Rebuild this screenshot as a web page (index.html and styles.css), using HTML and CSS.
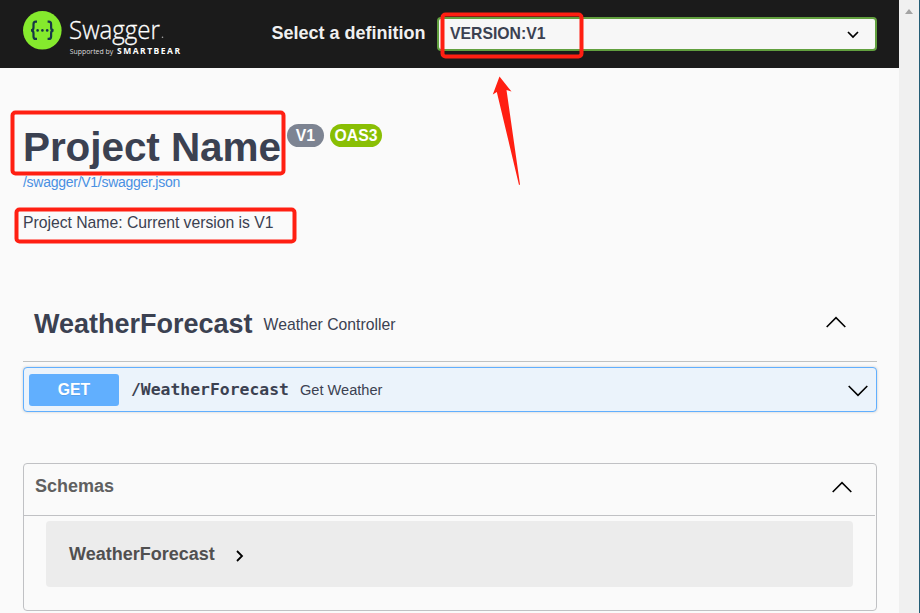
FILE: index.html
```html
<!DOCTYPE html>
<html lang="en">
<head>
<meta charset="utf-8">
<title>Swagger UI</title>
<link rel="stylesheet" href="styles.css">
</head>
<body>
<div class="window">
  <div class="page">
    <header class="topbar">
      <svg class="logo" width="170" height="68" viewBox="0 0 170 68">
        <circle cx="19.3" cy="30.3" r="19.3" fill="#85ea2d"/>
        <g fill="none" stroke="#173647" stroke-width="2.2">
          <path d="M14 21.7h-1.2q-2.3 0-2.3 2.5v3.2q0 2.9-2.5 2.9q2.5 0 2.5 2.9v3.2q0 2.5 2.3 2.5H14"/>
          <path d="M24.6 21.7h1.2q2.3 0 2.3 2.5v3.2q0 2.9 2.5 2.9q-2.5 0-2.5 2.9v3.2q0 2.5-2.3 2.5h-1.2"/>
        </g>
        <g fill="#173647"><circle cx="14.6" cy="30.4" r="1.3"/><circle cx="19.4" cy="30.4" r="1.3"/><circle cx="24.2" cy="30.4" r="1.3"/></g>
        <text class="logo-name" x="46" y="38.5" textLength="91" lengthAdjust="spacingAndGlyphs">Swagger</text>
        <circle cx="139.5" cy="37.3" r=".8" fill="#aaa"/>
        <text class="logo-by" x="46.7" y="54" textLength="43.5" lengthAdjust="spacingAndGlyphs">Supported by</text>
        <text class="logo-company" x="94" y="54" textLength="63">SMARTBEAR</text>
      </svg>
      <label class="definition">
        <span class="definition-label">Select a definition</span>
        <span class="select"><span>VERSION:V1</span>
          <svg width="12" height="8" viewBox="0 0 12 8"><path d="M1 1l5 5 5-5" fill="none" stroke="#000" stroke-width="1.7"/></svg>
        </span>
      </label>
    </header>
    <main class="content">
      <section class="info">
        <div class="title-row">
          <h1>Project Name</h1>
          <span class="badge version">V1</span>
          <span class="badge oas">OAS3</span>
        </div>
        <a class="spec-link">/swagger/V1/swagger.json</a>
        <p class="description">Project Name: Current version is V1</p>
      </section>
      <section class="tag">
        <h2>WeatherForecast</h2>
        <span class="tag-text">Weather Controller</span>
        <svg class="arrow" width="20" height="12" viewBox="0 0 20 12"><path d="M.7 11L10 1.6 19.3 11"/></svg>
      </section>
      <section class="operation">
        <span class="method">GET</span>
        <span class="path">/WeatherForecast</span>
        <span class="summary">Get Weather</span>
        <svg class="arrow" width="20" height="12" viewBox="0 0 20 12"><path d="M.7 1L10 10.4 19.3 1"/></svg>
      </section>
      <section class="schemas">
        <div class="schemas-head">
          <h3>Schemas</h3>
          <svg class="arrow" width="20" height="12" viewBox="0 0 20 12"><path d="M.7 11L10 1.6 19.3 11"/></svg>
        </div>
        <div class="model">
          <span>WeatherForecast</span>
          <svg width="8" height="12" viewBox="0 0 8 12"><path d="M1 1l5 5-5 5" fill="none" stroke="#000" stroke-width="1.8"/></svg>
        </div>
      </section>
    </main>
  </div>
  <aside class="scrollbar"><i></i></aside>
  <svg class="marks" width="920" height="613" viewBox="0 0 920 613">
    <g fill="none" stroke="#ff1f12" stroke-width="4">
      <rect x="442.5" y="14.5" width="139" height="42" rx="3"/>
      <rect x="12.5" y="112.5" width="271" height="61" rx="3"/>
      <rect x="16.5" y="209.5" width="278" height="32" rx="3"/>
    </g>
    <path d="M499.5 76.5L511.5 91.5 506.5 90 520 184.5 519 185 496.8 92 492.8 94.5Z" fill="#ff1f12"/>
  </svg>
</div>
</body>
</html>
```
FILE: styles.css
```css
* { box-sizing: border-box; }
body { margin: 0; font-family: "Liberation Sans", Arial, sans-serif; color: #3b4151; background: #fafafa; }
h1, h2, h3, p { margin: 0; }
.window { position: relative; display: flex; width: 920px; height: 613px; overflow: hidden; }
.page { width: 899px; }
.topbar { display: flex; height: 68px; padding: 0 22px 0 23px; background: #1b1b1b; }
.logo { flex: none; }
.logo-name { font: 300 26px "Open Sans", sans-serif; fill: #fff; stroke: #fff; stroke-width: .3px; }
.logo-by { font: 7.2px "Open Sans", sans-serif; fill: #ddd; }
.logo-company { font: 700 8.5px "Open Sans", sans-serif; fill: #fff; }
.definition { display: flex; flex: 1; align-items: center; margin-left: 78.5px; }
.definition-label { width: 165.5px; font-size: 18px; font-weight: 700; color: #f0f0f0; padding-bottom: 2px; white-space: nowrap; }
.select { display: flex; flex: 1; align-items: center; justify-content: space-between; height: 34px; padding: 0 16px 0 11px; border: 2px solid #62a03f; border-radius: 4px; background: #f7f7f7; font-size: 15.75px; font-weight: 700; }
.select svg { margin-top: 2px; }
.content { padding: 0 22px 0 23px; }
.info { height: 217px; padding-top: 55px; }
.title-row { display: flex; height: 48px; }
h1 { width: 264px; font-size: 40.5px; line-height: 48px; letter-spacing: -.08px; white-space: nowrap; }
.badge { height: 23px; margin-top: 1px; border-radius: 12px; color: #fff; font-size: 15.75px; font-weight: 700; line-height: 23px; text-align: center; }
.version { width: 37px; background: #7d8492; }
.oas { width: 52px; margin-left: 6px; background: #89bf04; }
.spec-link { display: block; margin-top: 3px; font-size: 14px; line-height: 16px; letter-spacing: -.27px; color: #4990e2; }
.description { margin-top: 23px; font-size: 15.75px; line-height: 20px; letter-spacing: -.02px; }
.tag { display: flex; align-items: center; height: 77px; padding: 0 31px 0 11px; border-bottom: 1px solid #c0c2c2; }
h2 { padding-top: 1px; font-size: 27px; line-height: 32px; }
.tag-text { margin-left: 11px; padding-top: 4px; font-size: 15.75px; }
.arrow { margin-left: auto; }
.arrow path { fill: none; stroke: #000; stroke-width: 1.6; }
.tag .arrow { margin-top: -2px; }
.operation { display: flex; align-items: center; height: 45px; margin-top: 5px; padding: 0 8px 0 5px; border: 1px solid #61affe; border-radius: 4px; background: #ebf3fb; box-shadow: 0 0 3px rgba(0,0,0,.19); }
.operation .arrow { margin-top: 2px; }
.method { width: 90px; height: 32px; border-radius: 3px; background: #61affe; color: #fff; font-size: 15.75px; font-weight: 700; line-height: 32px; text-align: center; text-shadow: 0 1px 0 rgba(0,0,0,.1); }
.path { margin-left: 12px; font: 700 16.4px "DejaVu Sans Mono", monospace; }
.summary { margin-left: 11px; font-size: 14.625px; }
.schemas { height: 148px; margin-top: 51px; border: 1px solid #c0c1c4; border-radius: 4px; }
.schemas-head { display: flex; align-items: center; height: 52px; margin-right: 1px; padding: 0 23px 0 11px; border-bottom: 1px solid #c0c1c4; }
h3 { padding-bottom: 6px; font-size: 18px; color: #606060; }
.schemas-head .arrow { margin-top: -5px; }
.model { display: flex; align-items: center; height: 66px; margin: 5px 23px 0 22px; padding-left: 23px; border-radius: 4px; background: #ececec; color: #505050; font-size: 18px; font-weight: 700; }
.model svg { margin: 3px 0 0 21px; }
.scrollbar { width: 21px; padding: 9px 0 0 6px; background: #f0f0f0; border-right: 1px solid #245c75; }
.scrollbar i { display: block; width: 0; border: 4.5px solid transparent; border-top: 0; border-bottom: 5px solid #a3a3a3; }
.marks { position: absolute; top: 0; left: 0; pointer-events: none; }
```
